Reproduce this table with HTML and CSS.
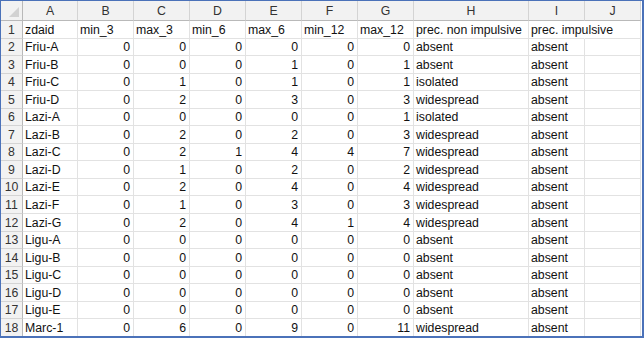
FILE: index.html
```html
<!DOCTYPE html>
<html>
<head>
<meta charset="utf-8">
<link rel="stylesheet" href="styles.css">
</head>
<body>
<div class="sheet">
  <div class="grid">
    <div class="hd corner"><span class="tri"></span></div>
    <div class="hd col">A</div><div class="hd col">B</div><div class="hd col">C</div><div class="hd col">D</div><div class="hd col">E</div><div class="hd col">F</div><div class="hd col">G</div><div class="hd col">H</div><div class="hd col">I</div><div class="hd col">J</div>

    <div class="hd row">1</div><div class="c">zdaid</div><div class="c">min_3</div><div class="c">max_3</div><div class="c">min_6</div><div class="c">max_6</div><div class="c">min_12</div><div class="c">max_12</div><div class="c">prec. non impulsive</div><div class="c over">prec. impulsive</div><div class="c"></div>

    <div class="hd row">2</div><div class="c">Friu-A</div><div class="c n">0</div><div class="c n">0</div><div class="c n">0</div><div class="c n">0</div><div class="c n">0</div><div class="c n">0</div><div class="c">absent</div><div class="c">absent</div><div class="c"></div>
    <div class="hd row">3</div><div class="c">Friu-B</div><div class="c n">0</div><div class="c n">0</div><div class="c n">0</div><div class="c n">1</div><div class="c n">0</div><div class="c n">1</div><div class="c">absent</div><div class="c">absent</div><div class="c"></div>
    <div class="hd row">4</div><div class="c">Friu-C</div><div class="c n">0</div><div class="c n">1</div><div class="c n">0</div><div class="c n">1</div><div class="c n">0</div><div class="c n">1</div><div class="c">isolated</div><div class="c">absent</div><div class="c"></div>
    <div class="hd row">5</div><div class="c">Friu-D</div><div class="c n">0</div><div class="c n">2</div><div class="c n">0</div><div class="c n">3</div><div class="c n">0</div><div class="c n">3</div><div class="c">widespread</div><div class="c">absent</div><div class="c"></div>
    <div class="hd row">6</div><div class="c">Lazi-A</div><div class="c n">0</div><div class="c n">0</div><div class="c n">0</div><div class="c n">0</div><div class="c n">0</div><div class="c n">1</div><div class="c">isolated</div><div class="c">absent</div><div class="c"></div>
    <div class="hd row">7</div><div class="c">Lazi-B</div><div class="c n">0</div><div class="c n">2</div><div class="c n">0</div><div class="c n">2</div><div class="c n">0</div><div class="c n">3</div><div class="c">widespread</div><div class="c">absent</div><div class="c"></div>
    <div class="hd row">8</div><div class="c">Lazi-C</div><div class="c n">0</div><div class="c n">2</div><div class="c n">1</div><div class="c n">4</div><div class="c n">4</div><div class="c n">7</div><div class="c">widespread</div><div class="c">absent</div><div class="c"></div>
    <div class="hd row">9</div><div class="c">Lazi-D</div><div class="c n">0</div><div class="c n">1</div><div class="c n">0</div><div class="c n">2</div><div class="c n">0</div><div class="c n">2</div><div class="c">widespread</div><div class="c">absent</div><div class="c"></div>
    <div class="hd row">10</div><div class="c">Lazi-E</div><div class="c n">0</div><div class="c n">2</div><div class="c n">0</div><div class="c n">4</div><div class="c n">0</div><div class="c n">4</div><div class="c">widespread</div><div class="c">absent</div><div class="c"></div>
    <div class="hd row">11</div><div class="c">Lazi-F</div><div class="c n">0</div><div class="c n">1</div><div class="c n">0</div><div class="c n">3</div><div class="c n">0</div><div class="c n">3</div><div class="c">widespread</div><div class="c">absent</div><div class="c"></div>
    <div class="hd row">12</div><div class="c">Lazi-G</div><div class="c n">0</div><div class="c n">2</div><div class="c n">0</div><div class="c n">4</div><div class="c n">1</div><div class="c n">4</div><div class="c">widespread</div><div class="c">absent</div><div class="c"></div>
    <div class="hd row">13</div><div class="c">Ligu-A</div><div class="c n">0</div><div class="c n">0</div><div class="c n">0</div><div class="c n">0</div><div class="c n">0</div><div class="c n">0</div><div class="c">absent</div><div class="c">absent</div><div class="c"></div>
    <div class="hd row">14</div><div class="c">Ligu-B</div><div class="c n">0</div><div class="c n">0</div><div class="c n">0</div><div class="c n">0</div><div class="c n">0</div><div class="c n">0</div><div class="c">absent</div><div class="c">absent</div><div class="c"></div>
    <div class="hd row">15</div><div class="c">Ligu-C</div><div class="c n">0</div><div class="c n">0</div><div class="c n">0</div><div class="c n">0</div><div class="c n">0</div><div class="c n">0</div><div class="c">absent</div><div class="c">absent</div><div class="c"></div>
    <div class="hd row">16</div><div class="c">Ligu-D</div><div class="c n">0</div><div class="c n">0</div><div class="c n">0</div><div class="c n">0</div><div class="c n">0</div><div class="c n">0</div><div class="c">absent</div><div class="c">absent</div><div class="c"></div>
    <div class="hd row">17</div><div class="c">Ligu-E</div><div class="c n">0</div><div class="c n">0</div><div class="c n">0</div><div class="c n">0</div><div class="c n">0</div><div class="c n">0</div><div class="c">absent</div><div class="c">absent</div><div class="c"></div>
    <div class="hd row">18</div><div class="c">Marc-1</div><div class="c n">0</div><div class="c n">6</div><div class="c n">0</div><div class="c n">9</div><div class="c n">0</div><div class="c n">11</div><div class="c">widespread</div><div class="c">absent</div><div class="c"></div>
  </div>
</div>
</body>
</html>
```
FILE: styles.css
```css
html, body {
  margin: 0;
  padding: 0;
  background: #ffffff;
}

.sheet {
  width: 644px;
  height: 338px;
  box-sizing: border-box;
  border: 1px solid #4b72b9;
  border-right-width: 2px;
  border-bottom-width: 2px;
  overflow: hidden;
  font-family: "Liberation Sans", Arial, sans-serif;
  font-size: 12.3px;
  color: #111111;
}

.grid {
  display: grid;
  grid-template-columns: 22px 55px 56px 56px 56px 56px 56px 56px 115px 56px 56px;
  grid-template-rows: 20px repeat(18, 17.55px);
}

.hd {
  box-sizing: border-box;
  background: #f2f2f2;
  color: #333333;
  border-right: 1px solid #d4d4d4;
  border-bottom: 1px solid #d4d4d4;
  display: flex;
  align-items: center;
  justify-content: center;
  white-space: nowrap;
}

.col {
  border-bottom-color: #b9b9b9;
  padding-top: 1px;
}

.row {
  border-right-color: #b9b9b9;
  align-items: flex-end;
  padding-bottom: 1px;
}

.corner {
  position: relative;
  border-right-color: #b9b9b9;
  border-bottom-color: #b9b9b9;
}

.tri {
  position: absolute;
  right: 3px;
  bottom: 3px;
  width: 0;
  height: 0;
  border-style: solid;
  border-width: 0 0 10px 10px;
  border-color: transparent transparent #d2d2d2 transparent;
}

.c {
  box-sizing: border-box;
  border-right: 1px solid #e2e2e2;
  border-bottom: 1px solid #e2e2e2;
  padding: 0 2px 1px 2px;
  display: flex;
  align-items: flex-end;
  white-space: nowrap;
  overflow: hidden;
  line-height: 14px;
}

.n {
  justify-content: flex-end;
  padding-right: 3px;
}

.over {
  overflow: visible;
  border-right-color: transparent;
}
```
